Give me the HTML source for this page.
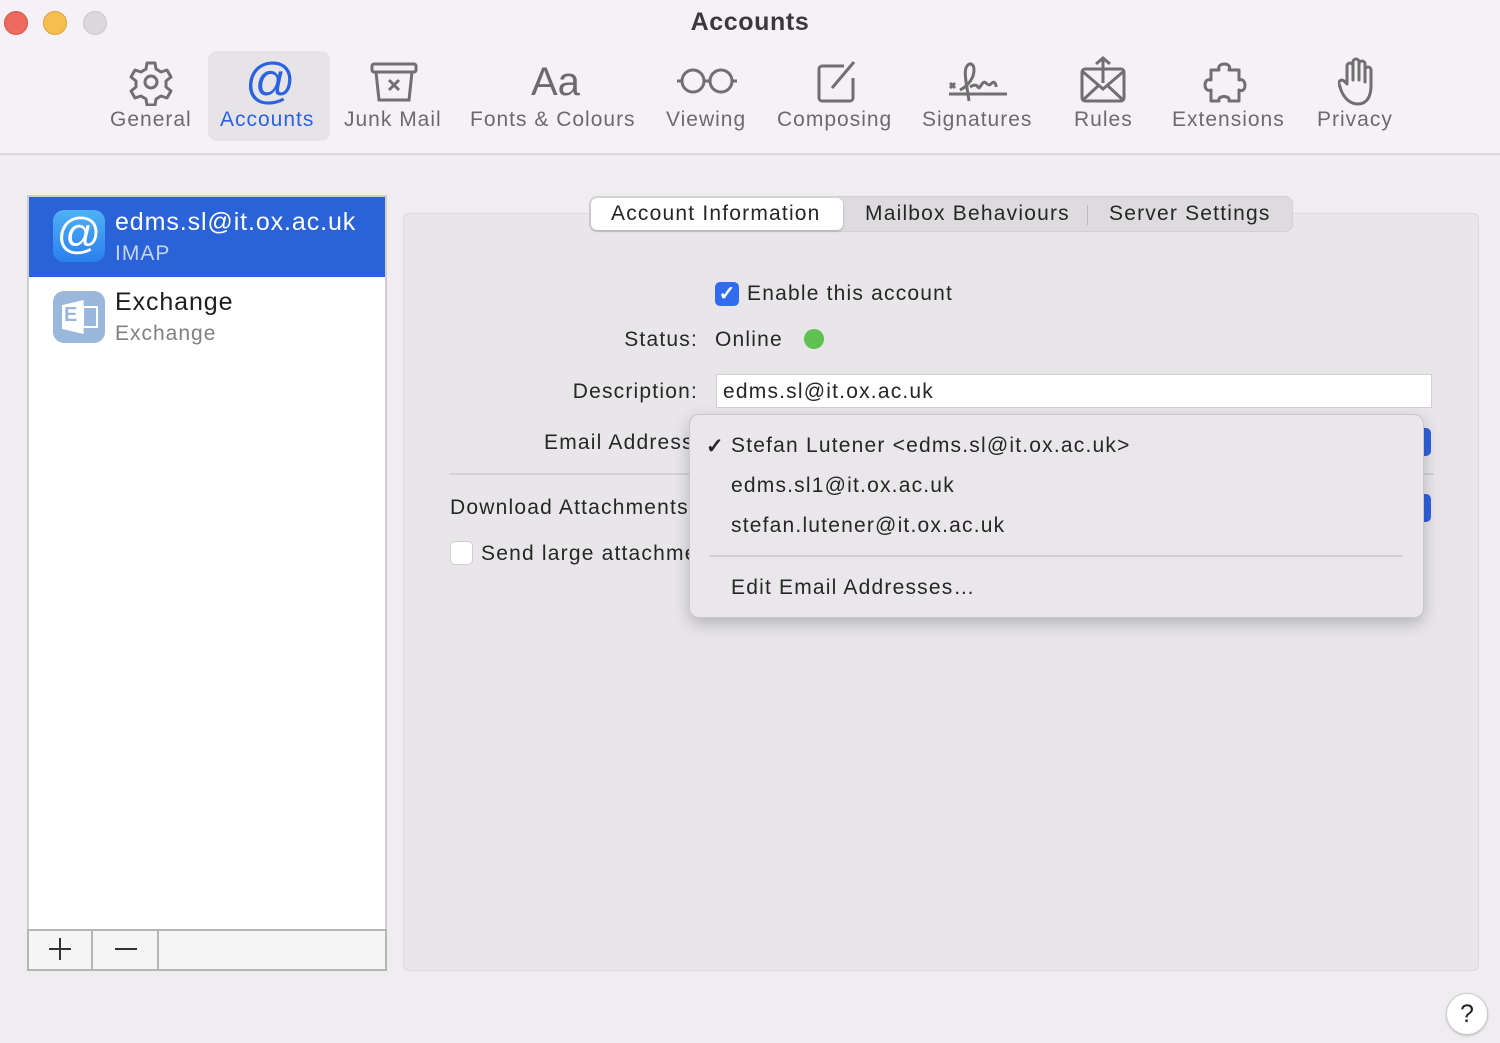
<!DOCTYPE html>
<html><head><meta charset="utf-8"><style>
*{margin:0;padding:0;box-sizing:border-box}
body{width:1500px;height:1043px;background:#efedf0;font-family:"Liberation Sans",sans-serif;position:relative;overflow:hidden;color:#262626}
.abs{position:absolute}
.top{left:0;top:0;width:1500px;height:155px;background:#f5f1f6;border-bottom:2px solid #d8d6d9}
.dot{top:11px;width:24px;height:24px;border-radius:50%}
.title{top:8px;left:0;width:1500px;text-align:center;font-size:25px;font-weight:bold;color:#3a3a3a;letter-spacing:.6px}
.tb{top:108px;font-size:21px;color:#6b6b6b;letter-spacing:1px;white-space:nowrap}
.ic{top:58px}
.ic svg{stroke:#707070;fill:none;stroke-width:3}
.lab{font-size:21px;color:#262626;letter-spacing:1.2px;white-space:nowrap}
.r{right:802px;text-align:right}
</style></head><body>
<div class="abs top"></div>
<div class="abs dot" style="left:4px;background:#ed6a5e;border:1px solid #d5574c"></div>
<div class="abs dot" style="left:43px;background:#f5bf4f;border:1px solid #d9a23b"></div>
<div class="abs dot" style="left:83px;background:#dcd9dd;border:1px solid #c8c6c9"></div>
<div class="abs title">Accounts</div>
<div class="abs" style="left:208px;top:51px;width:122px;height:90px;background:#e7e4e8;border-radius:9px"></div>

<div class="abs ic" style="left:128px"><svg width="46" height="48" viewBox="0 0 46 48"><path d="M19 5h8l1 6 5 3 6-2 4 7-5 4v6l5 4-4 7-6-2-5 3-1 6h-8l-1-6-5-3-6 2-4-7 5-4v-6l-5-4 4-7 6 2 5-3z" stroke-linejoin="round"/><circle cx="23" cy="24" r="6"/></svg></div>
<div class="abs" style="left:245px;top:52px;font-size:50px;color:#2a62e0">@</div>
<div class="abs ic" style="left:370px"><svg width="48" height="46" viewBox="0 0 48 46"><rect x="2" y="6" width="44" height="8" rx="2"/><path d="M6 14l3 28h30l3-28"/><path d="M19 22l10 10M29 22l-10 10"/></svg></div>
<div class="abs" style="left:531px;top:60px;font-size:40px;color:#6b6b6b">Aa</div>
<div class="abs ic" style="left:676px;top:66px"><svg width="62" height="30" viewBox="0 0 62 30"><circle cx="17" cy="15" r="11"/><circle cx="45" cy="15" r="11"/><path d="M28 15h6M1 15h5M56 15h5"/></svg></div>
<div class="abs ic" style="left:816px"><svg width="44" height="46" viewBox="0 0 44 46"><path d="M28 8H6a3 3 0 0 0-3 3v29a3 3 0 0 0 3 3h28a3 3 0 0 0 3-3V20"/><path d="M16 30L38 4"/></svg></div>
<div class="abs ic" style="left:946px;top:62px"><svg width="62" height="46" viewBox="0 0 62 46"><path d="M3 32h58"/><path d="M4 21l5 5M9 21l-5 5"/><path d="M14 28c8-4 14-12 14-20 0-6-4-8-7-4-4 5 0 20 2 35"/><path d="M24 25c3-2 6-3 8 0 2 4 4-8 8-4 3 3 4 2 6 0 2-2 4 0 4 4"/></svg></div>
<div class="abs ic" style="left:1080px;top:55px"><svg width="46" height="50" viewBox="0 0 46 50"><rect x="2" y="14" width="42" height="32" rx="3"/><path d="M2 16l21 18 21-18M3 45l15-14M43 45L28 31M23 28V4M16 9l7-6 7 6"/></svg></div>
<div class="abs ic" style="left:1199px;top:61px"><svg width="60" height="44" viewBox="0 0 60 44"><path d="M12 9h8c-3-8 14-8 10 0h10v10c8-3 8 14 0 10v11H30c2-6-12-6-10 0H12V29c-8 3-8-13 0-10z" stroke-linejoin="round"/></svg></div>
<div class="abs ic" style="left:1338px;top:56px"><svg width="38" height="50" viewBox="0 0 38 50"><path d="M9 28V10a3 3 0 0 1 6 0v14V6a3 3 0 0 1 6 0v18V8a3 3 0 0 1 6 0v18-12a3 3 0 0 1 6 0v16c0 10-4 18-13 18-8 0-14-6-17-14l-2-6a3 3 0 0 1 5-3z" stroke-linejoin="round"/></svg></div>

<div class="abs tb" style="left:110px">General</div>
<div class="abs tb" style="left:220px;color:#2a62e0">Accounts</div>
<div class="abs tb" style="left:344px">Junk Mail</div>
<div class="abs tb" style="left:470px">Fonts &amp; Colours</div>
<div class="abs tb" style="left:666px">Viewing</div>
<div class="abs tb" style="left:777px">Composing</div>
<div class="abs tb" style="left:922px">Signatures</div>
<div class="abs tb" style="left:1074px">Rules</div>
<div class="abs tb" style="left:1172px">Extensions</div>
<div class="abs tb" style="left:1317px">Privacy</div>

<!-- account list -->
<div class="abs" style="left:27px;top:195px;width:360px;height:776px;background:#fff;border:2px solid #cfcdd0"></div>
<div class="abs" style="left:29px;top:197px;width:356px;height:80px;background:#2a62d8"></div>
<div class="abs" style="left:53px;top:210px;width:52px;height:52px;border-radius:11px;background:linear-gradient(#4fb1f6,#2a80ee);color:#fff;font-size:44px;text-align:center;line-height:48px">@</div>
<div class="abs" style="left:115px;top:208px;font-size:25px;color:#fff;letter-spacing:.9px">edms.sl@it.ox.ac.uk</div>
<div class="abs" style="left:115px;top:242px;font-size:21px;color:#c5d4f5;letter-spacing:1px">IMAP</div>
<div class="abs" style="left:53px;top:291px;width:52px;height:52px;border-radius:11px;background:#9ab7dc"></div>
<div class="abs" style="left:62px;top:300px;width:36px;height:34px;background:#fff;clip-path:polygon(0 15%,60% 0,60% 100%,0 85%)"></div>
<div class="abs" style="left:64px;top:304px;font-size:20px;font-weight:bold;color:#9ab7dc">E</div>
<div class="abs" style="left:82px;top:306px;width:16px;height:22px;border:2px solid #fff"></div>
<div class="abs" style="left:115px;top:288px;font-size:25px;color:#1e1e1e;letter-spacing:.9px">Exchange</div>
<div class="abs" style="left:115px;top:322px;font-size:21px;color:#808080;letter-spacing:1px">Exchange</div>
<div class="abs" style="left:27px;top:929px;width:360px;height:42px;background:#f5f5f5;border:2px solid #b5b5b5"></div>
<div class="abs" style="left:91px;top:929px;width:2px;height:42px;background:#b5b5b5"></div>
<div class="abs" style="left:157px;top:929px;width:2px;height:42px;background:#b5b5b5"></div>
<div class="abs" style="left:49px;top:948px;width:22px;height:2px;background:#333"></div>
<div class="abs" style="left:59px;top:938px;width:2px;height:22px;background:#333"></div>
<div class="abs" style="left:115px;top:948px;width:22px;height:2px;background:#333"></div>

<!-- panel -->
<div class="abs" style="left:403px;top:213px;width:1076px;height:758px;background:#e8e6e9;border:1px solid #dcdadd;border-radius:6px"></div>
<div class="abs" style="left:589px;top:196px;width:704px;height:36px;background:#dddbde;border-radius:8px;border:1px solid #d2d0d3"></div>
<div class="abs" style="left:591px;top:198px;width:252px;height:32px;background:#fff;border-radius:6px;box-shadow:0 1px 2px rgba(0,0,0,.25)"></div>
<div class="abs lab" style="left:611px;top:202px">Account Information</div>
<div class="abs lab" style="left:865px;top:202px">Mailbox Behaviours</div>
<div class="abs" style="left:1087px;top:205px;width:1px;height:20px;background:#bbb"></div>
<div class="abs lab" style="left:1109px;top:202px">Server Settings</div>

<div class="abs" style="left:715px;top:282px;width:24px;height:24px;border-radius:5px;background:#2f6cf0;color:#fff;font-size:20px;text-align:center;line-height:24px;font-weight:bold">✓</div>
<div class="abs lab" style="left:747px;top:282px">Enable this account</div>
<div class="abs lab r" style="top:328px">Status:</div>
<div class="abs lab" style="left:715px;top:328px">Online</div>
<div class="abs" style="left:804px;top:329px;width:20px;height:20px;border-radius:50%;background:#5dc250"></div>
<div class="abs lab r" style="top:380px">Description:</div>
<div class="abs" style="left:716px;top:374px;width:716px;height:34px;background:#fff;border:1px solid #d0d0d0"></div>
<div class="abs lab" style="left:723px;top:380px">edms.sl@it.ox.ac.uk</div>
<div class="abs lab" style="left:544px;top:431px">Email Address</div>
<div class="abs" style="left:449px;top:473px;width:985px;height:2px;background:#d4d2d5"></div>
<div class="abs lab" style="left:450px;top:496px">Download Attachments</div>
<div class="abs" style="left:450px;top:541px;width:23px;height:24px;border-radius:5px;background:#fff;border:1px solid #cfcfcf"></div>
<div class="abs lab" style="left:481px;top:542px">Send large attachments</div>
<div class="abs" style="left:1412px;top:426px;width:21px;height:32px;border-radius:7px;background:#2f62e0;border:2px solid #e6e4e7"></div>
<div class="abs" style="left:1412px;top:492px;width:21px;height:32px;border-radius:7px;background:#2f62e0;border:2px solid #e6e4e7"></div>

<!-- dropdown -->
<div class="abs" style="left:689px;top:414px;width:735px;height:204px;background:#e9e7ea;border:1px solid #c9c7ca;border-radius:10px;box-shadow:0 6px 16px rgba(0,0,0,.22)"></div>
<div class="abs lab" style="left:706px;top:434px;font-weight:bold">✓</div>
<div class="abs lab" style="left:731px;top:434px">Stefan Lutener &lt;edms.sl@it.ox.ac.uk&gt;</div>
<div class="abs lab" style="left:731px;top:474px">edms.sl1@it.ox.ac.uk</div>
<div class="abs lab" style="left:731px;top:514px">stefan.lutener@it.ox.ac.uk</div>
<div class="abs" style="left:709px;top:555px;width:694px;height:2px;background:#d0ced1"></div>
<div class="abs lab" style="left:731px;top:576px">Edit Email Addresses…</div>

<div class="abs" style="left:1446px;top:993px;width:42px;height:42px;border-radius:50%;background:#fff;border:1px solid #ccc;box-shadow:0 1px 2px rgba(0,0,0,.2);text-align:center;font-size:25px;line-height:40px;color:#222">?</div>
</body></html>
